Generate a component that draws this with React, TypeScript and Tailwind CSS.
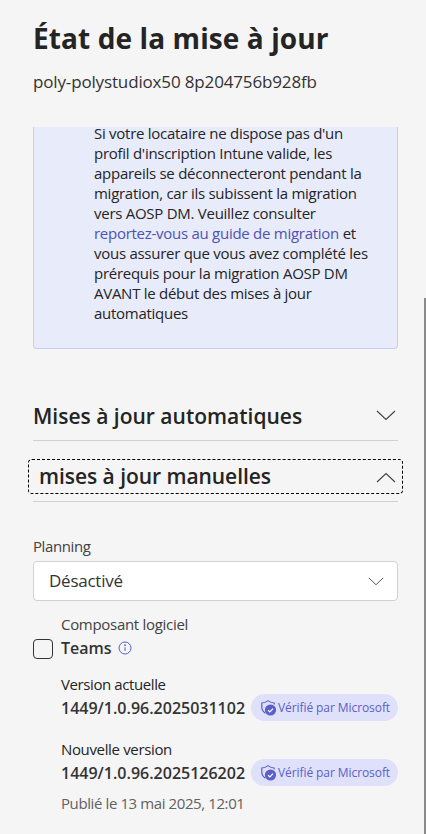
import React from "react";

const Chevron = ({ up, className }: { up?: boolean; className: string }) => (
  <svg viewBox="0 0 20 11" className={className} fill="none" stroke="currentColor" strokeWidth="1.1">
    <path d={up ? "M1 10 L10 1.5 L19 10" : "M1 1 L10 9.5 L19 1"} />
  </svg>
);

const Shield = () => (
  <svg viewBox="0 0 18 18" className="w-[18px] h-[18px] shrink-0">
    <path d="M8 1.6 C6 3.2 4 3.9 1.8 4 V8 C1.8 10.5 3 12.6 5.4 14.2" fill="none" stroke="#5b5fc7" strokeWidth="1.2" />
    <path d="M8 1.6 C10 3.2 12 3.9 14.2 4 V5.6" fill="none" stroke="#5b5fc7" strokeWidth="1.2" />
    <circle cx="10.5" cy="11" r="5.6" fill="#5b5fc7" />
    <path d="M8 11.2 L9.9 13 L13 9.6" fill="none" stroke="#fff" strokeWidth="1.2" />
  </svg>
);

const Badge = () => (
  <span className="flex items-center h-[27px] w-[147px] shrink-0 rounded-full bg-[#dfe1fb] pl-[9px] text-[12px] text-[#5b5fc7] tracking-[-0.08px]">
    <Shield />
    Vérifié par Microsoft
  </span>
);

export default function App() {
  return (
    <div
      className="relative w-[426px] h-[834px] overflow-hidden bg-[#f5f5f5] text-[#242424] pl-[33px] pr-[28px]"
      style={{ fontFamily: '"Open Sans", "Noto Sans", sans-serif' }}
    >
      <h1 className="pt-[18px] text-[28px] leading-[40px] font-bold tracking-[0.1px]">État de la mise à jour</h1>
      <p className="mt-[13px] text-[17px] leading-[22px] tracking-[-0.15px] text-[#333]">poly-polystudiox50 8p204756b928fb</p>

      <div className="mt-[34px] h-[222px] overflow-hidden bg-[#e8ebfa] border-x border-b border-[#c5cbfa] rounded-b-[4px] pl-[60px] pr-[19px] text-[15px] leading-[20px] tracking-[-0.27px]">
        <p className="mt-0 pt-0 translate-y-[-4px]">
          Si votre locataire ne dispose pas d'un profil d'inscription Intune valide, les appareils se déconnecteront
          pendant la migration, car ils subissent la migration vers AOSP DM. Veuillez consulter{" "}
          <span className="text-[#4f52b2]">reportez-vous au guide de migration</span> et vous assurer que vous avez
          complété les prérequis pour la migration AOSP DM AVANT le début des mises à jour automatiques
        </p>
      </div>

      <div className="mt-[38px] flex items-center justify-between h-[54px] border-b border-[#d1d1d1] pt-[6px]">
        <span className="text-[21px] font-semibold">Mises à jour automatiques</span>
        <Chevron className="w-[20px] h-[11px] mr-[2px] mb-[3px] text-[#424242]" />
      </div>

      <div className="mt-[18px] flex flex-col">
        <div className="flex items-center justify-between h-[35px] -mx-[5px] pl-[10px] pr-[6px] pt-[1px] border border-dashed border-black rounded-[4px]">
          <span className="text-[21px] font-semibold tracking-[-0.05px]">mises à jour manuelles</span>
          <Chevron up className="w-[20px] h-[11px] text-[#424242]" />
        </div>
        <div className="mt-[7px] border-b border-[#d1d1d1]" />
      </div>

      <label className="block mt-[34px] text-[15px] leading-[20px] tracking-[-0.4px] text-[#424242]">Planning</label>
      <div className="mt-[5px] flex items-center justify-between h-[40px] bg-white border border-[#d1d1d1] rounded-[4px] pl-[15px] pr-[13px] text-[17px] tracking-[-0.25px] text-[#333]">
        Désactivé
        <Chevron className="w-[16px] h-[9px] text-[#424242]" />
      </div>

      <div className="mt-[13px] flex gap-[8px]">
        <div className="w-[20px] h-[20px] mt-[25px] shrink-0 bg-[#f5f5f5] border border-[#333] rounded-[4px]" />
        <div className="flex-1 min-w-0">
          <p className="text-[15px] leading-[20px] tracking-[-0.3px] text-[#424242]">Composant logiciel</p>
          <p className="mt-[3px] flex items-center gap-[6px] text-[16px] leading-[22px] font-semibold text-[#333]">
            Teams
            <svg viewBox="0 0 14 14" className="w-[14px] h-[14px]" fill="none" stroke="#5b5fc7" strokeWidth="1">
              <circle cx="7" cy="7" r="6" />
              <path d="M7 6.2 V10" />
              <circle cx="7" cy="4.2" r="0.5" fill="#5b5fc7" />
            </svg>
          </p>

          <p className="mt-[15px] text-[15px] leading-[20px] tracking-[-0.4px]">Version actuelle</p>
          <div className="flex items-center justify-between">
            <span className="text-[16px] leading-[24px] font-semibold text-[#333]">1449/1.0.96.2025031102</span>
            <Badge />
          </div>

          <p className="mt-[18px] text-[15px] leading-[20px] tracking-[-0.35px]">Nouvelle version</p>
          <div className="flex items-center justify-between">
            <span className="text-[16px] leading-[24px] font-semibold text-[#333]">1449/1.0.96.2025126202</span>
            <Badge />
          </div>
          <p className="mt-[7px] text-[15px] leading-[20px] tracking-[-0.4px] text-[#616161]">Publié le 13 mai 2025, 12:01</p>
        </div>
      </div>

      <div className="absolute right-0 top-[298px] bottom-0 w-[2px] bg-[#8a8a8a]" />
    </div>
  );
}
